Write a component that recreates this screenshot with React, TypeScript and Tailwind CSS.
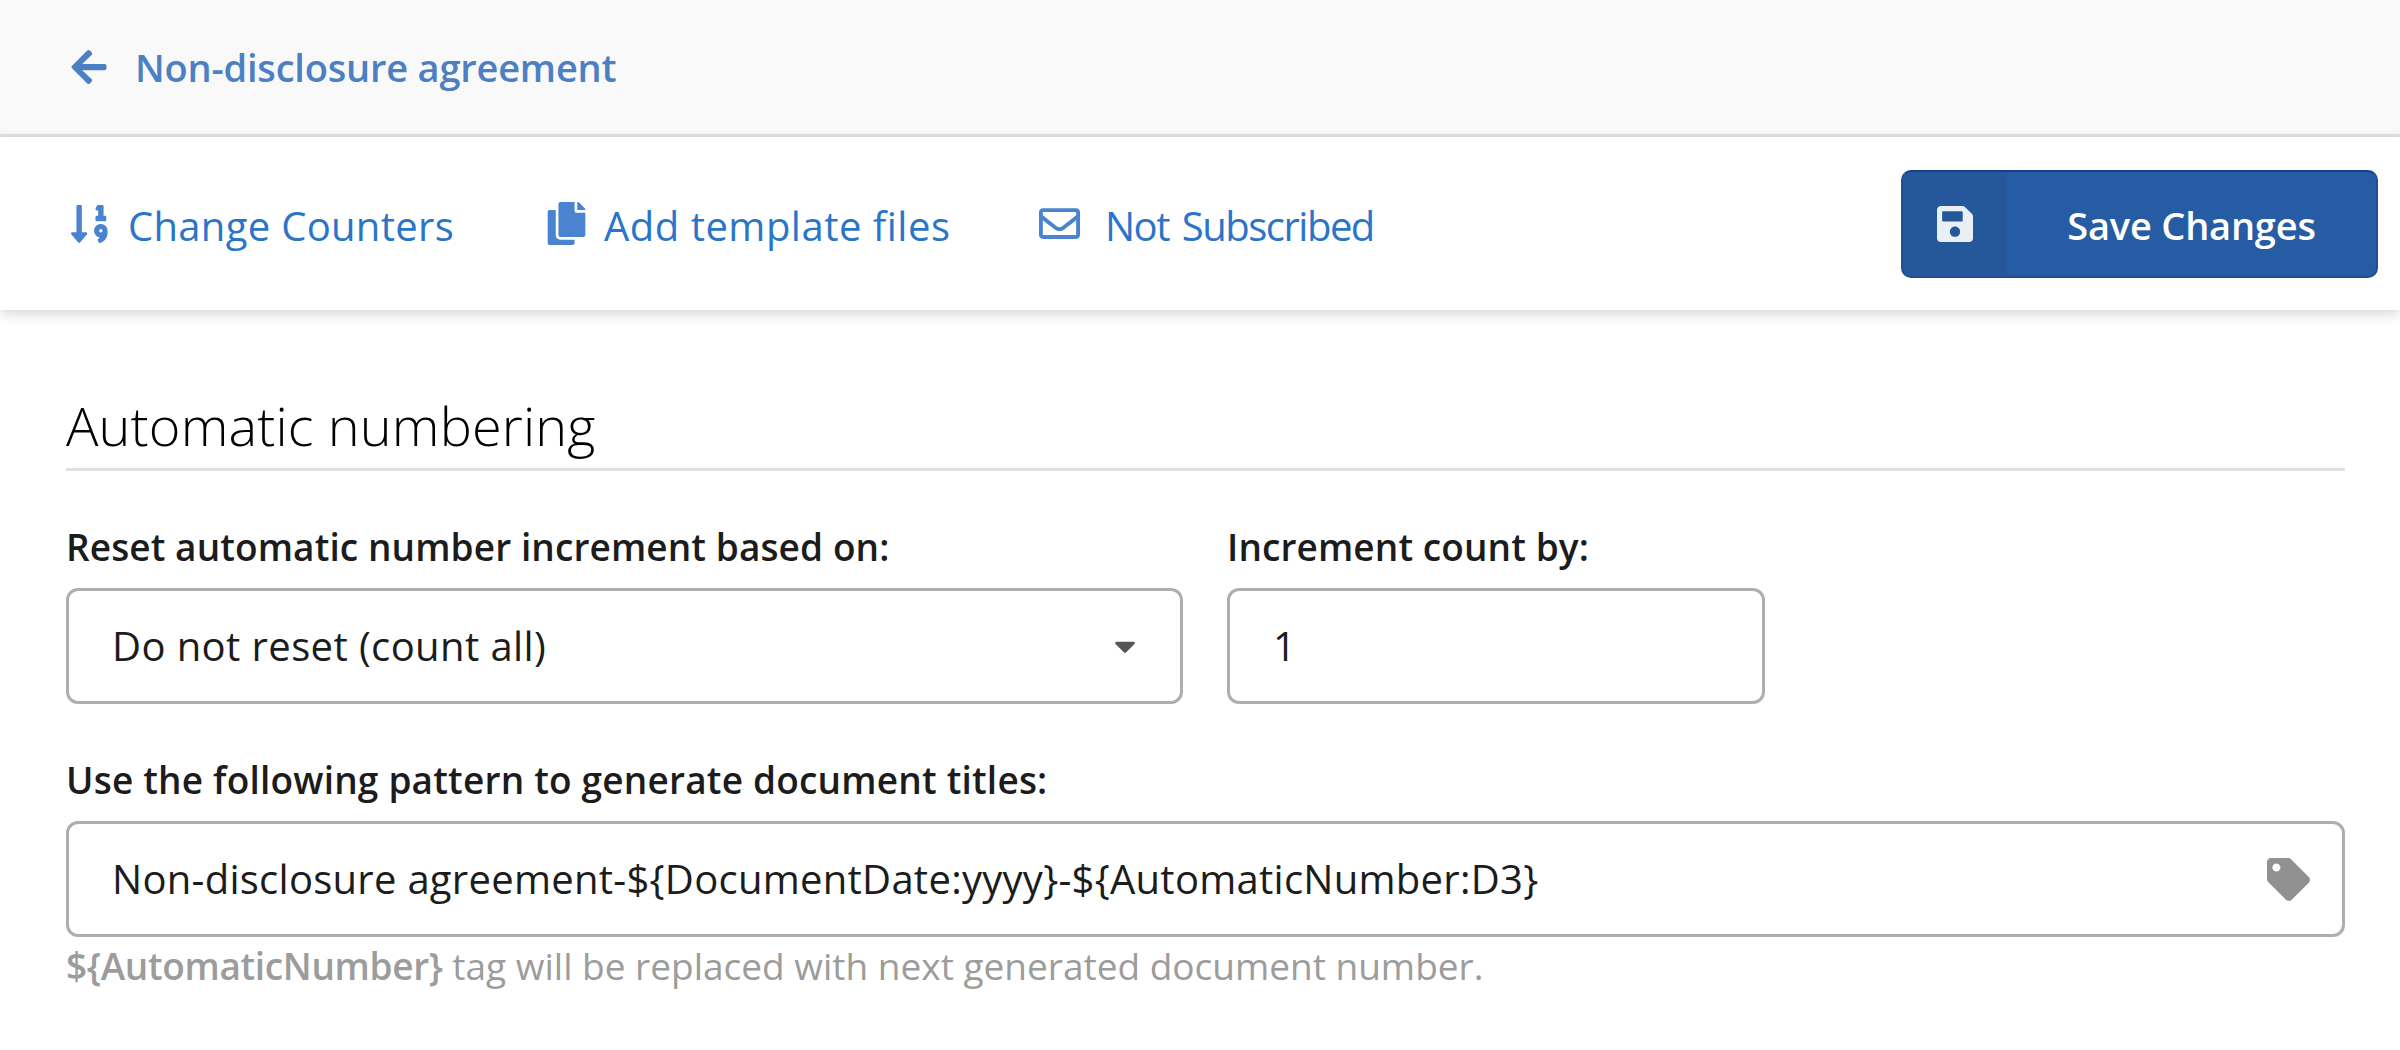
import React from 'react';
import { FaArrowLeft, FaCaretDown, FaSortNumericDown, FaCopy, FaRegEnvelope, FaSave, FaTag } from 'react-icons/fa';

const ToolbarLink: React.FC<{ icon: React.ReactNode; label: string; className: string; labelClass: string }> = ({ icon, label, className, labelClass }) => (
  <div className={`flex items-center ${className}`}>
    {icon}
    <span className={`mt-[5px] whitespace-nowrap text-[40px] leading-[48px] text-[#2a75c9] ${labelClass}`}>{label}</span>
  </div>
);

const App: React.FC = () => {
  return (
    <div className="min-h-[1050px] bg-white text-[#1c1c1c] [font-family:'Open_Sans',sans-serif]">
      <header className="flex h-[137px] items-center border-b-[3px] border-[#e2e2e2] bg-[#f9f9f9] pl-[69px]">
        <FaArrowLeft className="h-[40px] w-[40px] text-[#4c80c3]" />
        <span className="ml-[26px] text-[38px] font-semibold leading-[48px] tracking-[-0.2px] text-[#4c80c3]">Non-disclosure agreement</span>
      </header>

      <div className="relative flex h-[173px] items-center pl-[71px] pr-[22px] shadow-[0_4px_12px_rgba(0,0,0,0.16)]">
        <ToolbarLink
          className="w-[476px]"
          labelClass="ml-[19px] tracking-[0.3px]"
          icon={<FaSortNumericDown className="h-[44px] w-[38px] text-[#4a84d0]" />}
          label="Change Counters"
        />
        <ToolbarLink
          className="w-[492px]"
          labelClass="ml-[18px] tracking-[0.5px]"
          icon={<FaCopy className="h-[43px] w-[39px] text-[#4a84d0]" />}
          label="Add template files"
        />
        <ToolbarLink
          className=""
          labelClass="ml-[25px] tracking-[-1.5px] [word-spacing:4px]"
          icon={<FaRegEnvelope className="h-[41px] w-[41px] text-[#4a84d0]" />}
          label="Not Subscribed"
        />
        <button className="ml-auto flex h-[108px] w-[477px] overflow-hidden rounded-[10px] border-2 border-[#1f4f8f] border-t-[#12408c] bg-[#265ca3] text-white">
          <span className="flex h-full w-[104px] items-center justify-center bg-[#25589a]">
            <FaSave className="h-[42px] w-[36px] text-[#eaeef5]" />
          </span>
          <span className="mt-[2px] flex flex-1 items-center justify-center text-[38px] font-semibold leading-[48px] tracking-[-0.2px]">Save Changes</span>
        </button>
      </div>

      <main className="pl-[66px] pr-[55px] pt-[81px]">
        <h2 className="h-[68px] text-[54px] font-light leading-[68px] tracking-[0.15px] text-black">Automatic numbering</h2>
        <div className="mt-[9px] h-[3px] bg-[#e0e0e0]" />

        <div className="mt-[52px] flex gap-[44px]">
          <div className="w-[1117px]">
            <label className="block text-[37px] font-semibold leading-[48px] tracking-[0.1px]">Reset automatic number increment based on:</label>
            <div className="mt-[17px] flex h-[116px] items-center justify-between rounded-[12px] border-[3px] border-[#aeaeae] pl-[43px] pr-[40px] text-[40px] tracking-[0.4px]">
              <span>Do not reset (count all)</span>
              <FaCaretDown className="h-[34px] w-[30px] text-[#555555]" />
            </div>
          </div>
          <div className="w-[538px]">
            <label className="block text-[37px] font-semibold leading-[48px] tracking-[0.1px]">Increment count by:</label>
            <div className="mt-[17px] flex h-[116px] items-center rounded-[12px] border-[3px] border-[#aeaeae] pl-[43px] text-[40px]">1</div>
          </div>
        </div>

        <label className="mt-[52px] block text-[37px] font-semibold leading-[48px] tracking-[0.2px]">Use the following pattern to generate document titles:</label>
        <div className="mt-[17px] flex h-[116px] items-center justify-between rounded-[12px] border-[3px] border-[#aeaeae] pl-[43px] pr-[32px] text-[40px] tracking-[0.27px]">
          <span>Non-disclosure agreement-{'${DocumentDate:yyyy}'}-{'${AutomaticNumber:D3}'}</span>
          <FaTag className="h-[43px] w-[43px] text-[#919191]" />
        </div>
        <p className="mt-[6px] text-[37px] leading-[46px] text-[#9c9c9c]">
          <span className="font-semibold tracking-[-0.35px]">{'${AutomaticNumber}'}</span> tag will be replaced with next generated document number.
        </p>
      </main>
    </div>
  );
};

export default App;
